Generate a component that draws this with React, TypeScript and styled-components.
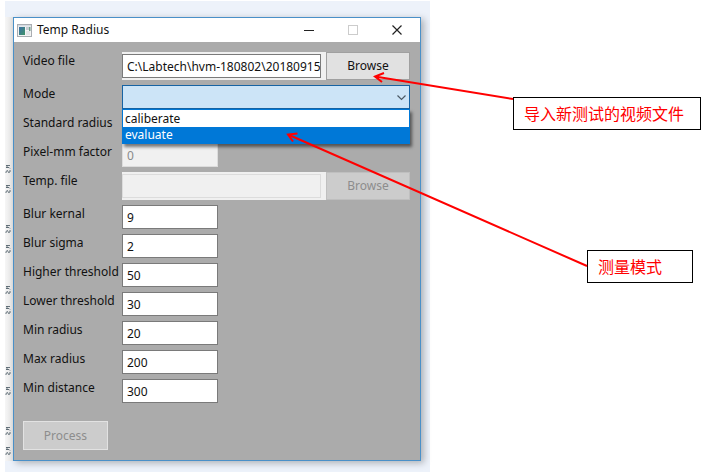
import React from "react";
import styled, { createGlobalStyle, css } from "styled-components";

const GlobalStyle = createGlobalStyle`
  * { box-sizing: border-box; }
  body {
    margin: 0;
    background: #fff;
    color: #111;
    font: 12px/18px "Noto Sans", "Noto Sans CJK SC", sans-serif;
  }
`;

const Stage = styled.main`
  position: relative;
  display: grid;
  grid-template-columns: minmax(0, 425fr) minmax(0, 292fr);
  padding: 1px 0 3px 5px;
`;

const Backdrop = styled.section`
  display: grid;
  grid-template-columns: 8px minmax(0, 1fr);
  padding: 16px 9px 11px 0;
  background: #edf2fa;
`;

const Ruler = styled.svg`
  display: block;
  width: 8px;
  height: 444px;
  background: linear-gradient(90deg, #f6f6f6, #e4e4e4);
`;

const Window = styled.div`
  border: 1px solid #4a90c8;
  background: #ababab;
  box-shadow: 3px 2px 7px rgba(0, 0, 0, 0.28);
`;

const TitleBar = styled.header`
  display: flex;
  align-items: center;
  height: 24px;
  padding: 0 1px 0 3px;
  background: #fff;
`;

const AppIcon = styled.svg`
  width: 15px;
  height: 13px;
`;

const Title = styled.h1`
  flex: 1;
  margin: 0 0 0 5px;
  font-size: 12px;
  font-weight: 400;
`;

const CaptionButton = styled.button`
  display: grid;
  place-items: center;
  width: 44px;
  height: 24px;
  padding: 0;
  border: 0;
  background: transparent;
`;

const Form = styled.form`
  display: grid;
  gap: 5px;
  padding: 10px 10px 10px 9px;
`;

const Row = styled.div`
  display: grid;
  grid-template-columns: 99px minmax(0, 1fr);
`;

const Label = styled.label`
  white-space: nowrap;
`;

const TextBox = styled.input<{ $wide?: boolean }>`
  width: ${(p) => (p.$wide ? "auto" : "96px")};
  ${(p) => p.$wide && css`flex: 1; min-width: 0;`}
  height: 24px;
  padding: 0 0 0 4px;
  border: 1px solid #7a7a7a;
  background: #fff;
  color: #111;
  font: inherit;
  outline: 0;
  &:disabled {
    border-color: #dcdcdc;
    background: #f0f0f0;
    color: #8a8a8a;
  }
`;

const FilePanel = styled.div`
  display: flex;
  align-items: center;
  gap: 5px;
  height: 28px;
  background: #f0f0f0;
`;

const PushButton = styled.button`
  width: 84px;
  height: 28px;
  padding: 0;
  border: 1px solid #a0a0a0;
  background: #e1e1e1;
  color: #111;
  font: inherit;
  &:disabled {
    border-color: #bfbfbf;
    background: #cccccc;
    color: #8d8d8d;
  }
`;

const ProcessButton = styled(PushButton)`
  margin-top: 13px;
  width: 85px;
  height: 29px;
  &:disabled {
    border-color: #e2e2e2;
  }
`;

const Combo = styled.div`
  position: relative;
`;

const Select = styled.select`
  display: block;
  appearance: none;
  width: 100%;
  height: 24px;
  padding: 0 20px 0 4px;
  border: 1px solid #1763a3;
  border-radius: 0;
  background: #cce4f7;
  font: inherit;
  outline: 0;
`;

const Chevron = styled.svg`
  position: absolute;
  top: 10px;
  right: 4px;
  pointer-events: none;
`;

const Options = styled.ul`
  position: absolute;
  z-index: 1;
  top: 100%;
  left: 0;
  right: 0;
  margin: 0;
  padding: 1px 0 0;
  border: 1px solid #0078d7;
  background: #fff;
  list-style: none;
  box-shadow: 2px 3px 3px rgba(0, 0, 0, 0.5);
`;

const Option = styled.li<{ $active?: boolean }>`
  padding-left: 2px;
  line-height: 16px;
  background: ${(p) => (p.$active ? "#0078d7" : "#fff")};
  color: ${(p) => (p.$active ? "#fff" : "#111")};
`;

const Notes = styled.aside`
  display: flex;
  flex-direction: column;
  align-items: flex-end;
  gap: 120px;
  padding: 96px 21px 0 0;
`;

const Note = styled.p<{ $short?: boolean }>`
  margin: 0 ${(p) => (p.$short ? "8px" : "0")} 0 0;
  width: ${(p) => (p.$short ? "106px" : "188px")};
  padding: 2px 10px;
  border: 1px solid #000;
  background: #fff;
  color: #f00;
  font: 400 16px/27px "Noto Sans CJK SC", sans-serif;
  white-space: nowrap;
`;

const Arrows = styled.svg`
  position: absolute;
  z-index: 2;
  top: 0;
  left: 0;
  width: 100%;
  height: 475px;
  pointer-events: none;
`;

const marks = [152, 172, 212, 232, 273, 293, 354, 374, 414, 434];

const parameters = [
  ["Blur kernal", "9"],
  ["Blur sigma", "2"],
  ["Higher threshold", "50"],
  ["Lower threshold", "30"],
  ["Min radius", "20"],
  ["Max radius", "200"],
  ["Min distance", "300"],
];

function Field({ label, value, disabled }: { label: string; value: string; disabled?: boolean }) {
  const id = label.toLowerCase().replace(/\W+/g, "-");
  return (
    <Row>
      <Label htmlFor={id}>{label}</Label>
      <TextBox id={id} defaultValue={value} disabled={disabled} />
    </Row>
  );
}

function FileField({ label, value, disabled }: { label: string; value: string; disabled?: boolean }) {
  const id = label.toLowerCase().replace(/\W+/g, "-");
  return (
    <Row>
      <Label htmlFor={id}>{label}</Label>
      <FilePanel>
        <TextBox $wide id={id} defaultValue={value} disabled={disabled} />
        <PushButton type="button" disabled={disabled}>Browse</PushButton>
      </FilePanel>
    </Row>
  );
}

export default function App() {
  return (
    <>
      <GlobalStyle />
      <Stage>
        <Backdrop>
          <Ruler viewBox="0 0 8 444" aria-hidden="true">
            {marks.map((y) => (
              <path
                key={y}
                transform={`translate(1 ${y - 4})`}
                d="M0 0.5H4M0 2.500H3L4 3.500M1 0V3M0 8V6.500L1.500 5.500L2.500 7.500L4 7V5"
                fill="none"
                stroke="#56646e"
                strokeWidth="0.9"
              />
            ))}
          </Ruler>
          <Window>
            <TitleBar>
              <AppIcon viewBox="0 0 15 13" aria-hidden="true">
                <defs>
                  <linearGradient id="pane" x1="0" y1="0" x2="1" y2="1">
                    <stop offset="0" stopColor="#3d6fa8" />
                    <stop offset="1" stopColor="#3f9467" />
                  </linearGradient>
                </defs>
                <rect x="0.5" y="0.5" width="14" height="12" fill="#f4f4f4" stroke="#a9adb2" />
                <rect x="1" y="1" width="13" height="1.500" fill="#d5dbe2" />
                <rect x="2" y="3" width="6" height="8" fill="url(#pane)" />
                <rect x="9" y="3" width="4" height="3" fill="#c6ccd2" />
                <rect x="12" y="3" width="1.500" height="4" fill="#6fa08a" />
                <rect x="9" y="7" width="4" height="4" fill="#e3e5e8" />
              </AppIcon>
              <Title>Temp Radius</Title>
              <CaptionButton type="button" aria-label="Minimize">
                <svg width="10" height="10"><path d="M0 5.500H10" stroke="#222" /></svg>
              </CaptionButton>
              <CaptionButton type="button" aria-label="Maximize" disabled>
                <svg width="10" height="10"><rect x="0.5" y="0.5" width="9" height="9" fill="none" stroke="#ccc" /></svg>
              </CaptionButton>
              <CaptionButton type="button" aria-label="Close">
                <svg width="10" height="10"><path d="M0.5 0.5L9.500 9.500M9.500 0.5L0.5 9.500" stroke="#222" strokeWidth="1.200" /></svg>
              </CaptionButton>
            </TitleBar>
            <Form>
              <FileField label="Video file" value="C:\Labtech\hvm-180802\201809157" />
              <Row>
                <Label htmlFor="mode">Mode</Label>
                <Combo>
                  <Select id="mode" defaultValue="">
                    <option value="" />
                    <option>caliberate</option>
                    <option>evaluate</option>
                  </Select>
                  <Chevron width="9" height="6" aria-hidden="true">
                    <path d="M0.5 0.5L4.500 4.500L8.500 0.5" fill="none" stroke="#4c5a66" strokeWidth="1.200" />
                  </Chevron>
                  <Options role="listbox" aria-label="Mode">
                    <Option role="option" aria-selected={false}>caliberate</Option>
                    <Option role="option" aria-selected $active>evaluate</Option>
                  </Options>
                </Combo>
              </Row>
              <Field label="Standard radius" value="" disabled />
              <Field label="Pixel-mm factor" value="0" disabled />
              <FileField label="Temp. file" value="" disabled />
              {parameters.map(([label, value]) => (
                <Field key={label} label={label} value={value} />
              ))}
              <ProcessButton type="submit" disabled>Process</ProcessButton>
            </Form>
          </Window>
        </Backdrop>
        <Notes lang="zh-CN">
          <Note>导入新测试的视频文件</Note>
          <Note $short>测量模式</Note>
        </Notes>
        <Arrows viewBox="0 0 722 475" preserveAspectRatio="none" aria-hidden="true">
          <g fill="none" stroke="#f00" strokeWidth="2">
            <path d="M513 99L375 76.500M384 73L375 76.500L382 82" />
            <path d="M587 266L288 134.500M297.500 133.500L288 134.500L293 141.500" />
          </g>
        </Arrows>
      </Stage>
    </>
  );
}
